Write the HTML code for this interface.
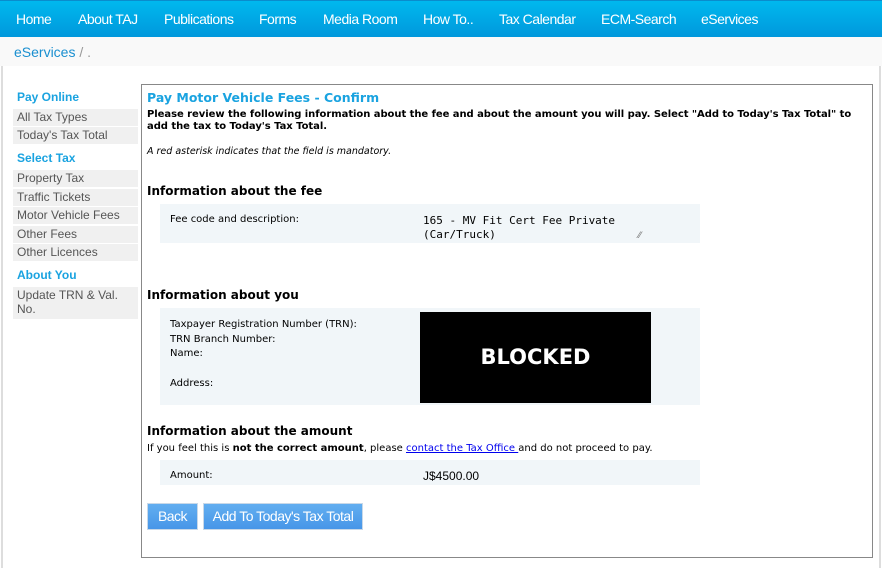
<!DOCTYPE html>
<html><head><meta charset="utf-8"><style>
*{margin:0;padding:0;box-sizing:border-box}
body{width:882px;height:568px;background:#fff;position:relative;overflow:hidden;font-family:"DejaVu Sans","Liberation Sans",sans-serif;color:#000}
.a{position:absolute;white-space:nowrap}
#nav{position:absolute;left:0;top:0;width:882px;height:37px;background:linear-gradient(#00b8ee,#0098dc);border-top:1px solid #0a8ccc}
#nav span{position:absolute;top:10px;color:#fff;font:14px "Liberation Sans",Arial,sans-serif;letter-spacing:-0.5px}
#bc{position:absolute;left:0;top:37px;width:882px;height:29px;background:#f9f9f9}
.side{position:absolute;left:13px;width:125px;background:#f0f0f0;color:#555;font:12px "Liberation Sans",Arial,sans-serif;padding:1px 4px;height:17px}
.sh{position:absolute;left:17px;color:#1aa3e0;font:bold 12px "Liberation Sans",Arial,sans-serif}
.panel{position:absolute;left:160px;width:540px;background:#f1f6f9}
.btn{position:absolute;top:503px;height:27px;background:linear-gradient(#62aef0,#4796e8);border:1px solid #c8d8e8;color:#fff;font:14px "Liberation Sans",Arial,sans-serif;letter-spacing:-0.5px;text-align:center;line-height:25px}
</style></head><body>
<div id="nav">
<span style="left:16px">Home</span><span style="left:78px">About TAJ</span><span style="left:164px">Publications</span><span style="left:259px">Forms</span><span style="left:323px">Media Room</span><span style="left:423px">How To..</span><span style="left:499px">Tax Calendar</span><span style="left:601px">ECM-Search</span><span style="left:701px">eServices</span>
</div>
<div id="bc"><span class="a" style="left:14px;top:7px;font:14px 'Liberation Sans',Arial,sans-serif;color:#1a8fd0">eServices <span style="color:#999">/ .</span></span></div>
<div class="a" style="left:1px;top:66px;width:2px;height:502px;background:#ddd"></div>
<div class="a" style="left:879px;top:66px;width:2px;height:502px;background:#ddd"></div>

<div class="sh" style="top:90px">Pay Online</div>
<div class="side" style="top:109px">All Tax Types</div>
<div class="side" style="top:127px">Today's Tax Total</div>
<div class="sh" style="top:151px">Select Tax</div>
<div class="side" style="top:170px">Property Tax</div>
<div class="side" style="top:189px">Traffic Tickets</div>
<div class="side" style="top:207px">Motor Vehicle Fees</div>
<div class="side" style="top:226px">Other Fees</div>
<div class="side" style="top:244px">Other Licences</div>
<div class="sh" style="top:268px">About You</div>
<div class="side" style="top:287px;height:32px;white-space:normal;line-height:14px">Update TRN &amp; Val. No.</div>

<div class="a" style="left:141px;top:84px;width:732px;height:474px;border:1px solid #888"></div>
<div class="a" style="left:147px;top:90px;color:#1aa3e0;font-weight:bold;font-size:12.5px">Pay Motor Vehicle Fees - Confirm</div>
<div class="a" style="left:147px;top:109px;font-weight:bold;font-size:10px;line-height:12px;letter-spacing:-0.05px">Please review the following information about the fee and about the amount you will pay. Select "Add to Today's Tax Total" to<br>add the tax to Today's Tax Total.</div>
<div class="a" style="left:147px;top:146px;font-style:italic;font-size:9.5px">A red asterisk indicates that the field is mandatory.</div>

<div class="a" style="left:147px;top:184px;font-weight:bold;font-size:12px">Information about the fee</div>
<div class="panel" style="top:204px;height:39px"></div>
<div class="a" style="left:170px;top:214px;font-size:10px">Fee code and description:</div>
<div class="a" style="left:423px;top:214px;font:11px 'DejaVu Sans Mono','Liberation Mono',monospace;line-height:14px">165 - MV Fit Cert Fee Private<br>(Car/Truck)</div>
<div class="a" style="left:638px;top:231px;font-size:9px;color:#777">⁄⁄</div>

<div class="a" style="left:147px;top:288px;font-weight:bold;font-size:12px">Information about you</div>
<div class="panel" style="top:308px;height:97px"></div>
<div class="a" style="left:170px;top:318px;font-size:10px;line-height:14.7px">Taxpayer Registration Number (TRN):<br>TRN Branch Number:<br>Name:<br><br>Address:</div>
<div class="a" style="left:420px;top:312px;width:231px;height:91px;background:#000;color:#fff;font:bold 21px 'DejaVu Sans',sans-serif;text-align:center;line-height:91px">BLOCKED</div>

<div class="a" style="left:147px;top:424px;font-weight:bold;font-size:12px">Information about the amount</div>
<div class="a" style="left:147px;top:443px;font-size:10px">If you feel this is <b>not the correct amount</b>, please <span style="color:#00e;text-decoration:underline">contact the Tax Office </span>and do not proceed to pay.</div>
<div class="panel" style="top:460px;height:25px"></div>
<div class="a" style="left:170px;top:470px;font-size:10px">Amount:</div>
<div class="a" style="left:423px;top:469px;font:12px 'Liberation Sans',Arial,sans-serif">J$4500.00</div>

<div class="btn" style="left:147px;width:51px">Back</div>
<div class="btn" style="left:203px;width:160px">Add To Today's Tax Total</div>
</body></html>
